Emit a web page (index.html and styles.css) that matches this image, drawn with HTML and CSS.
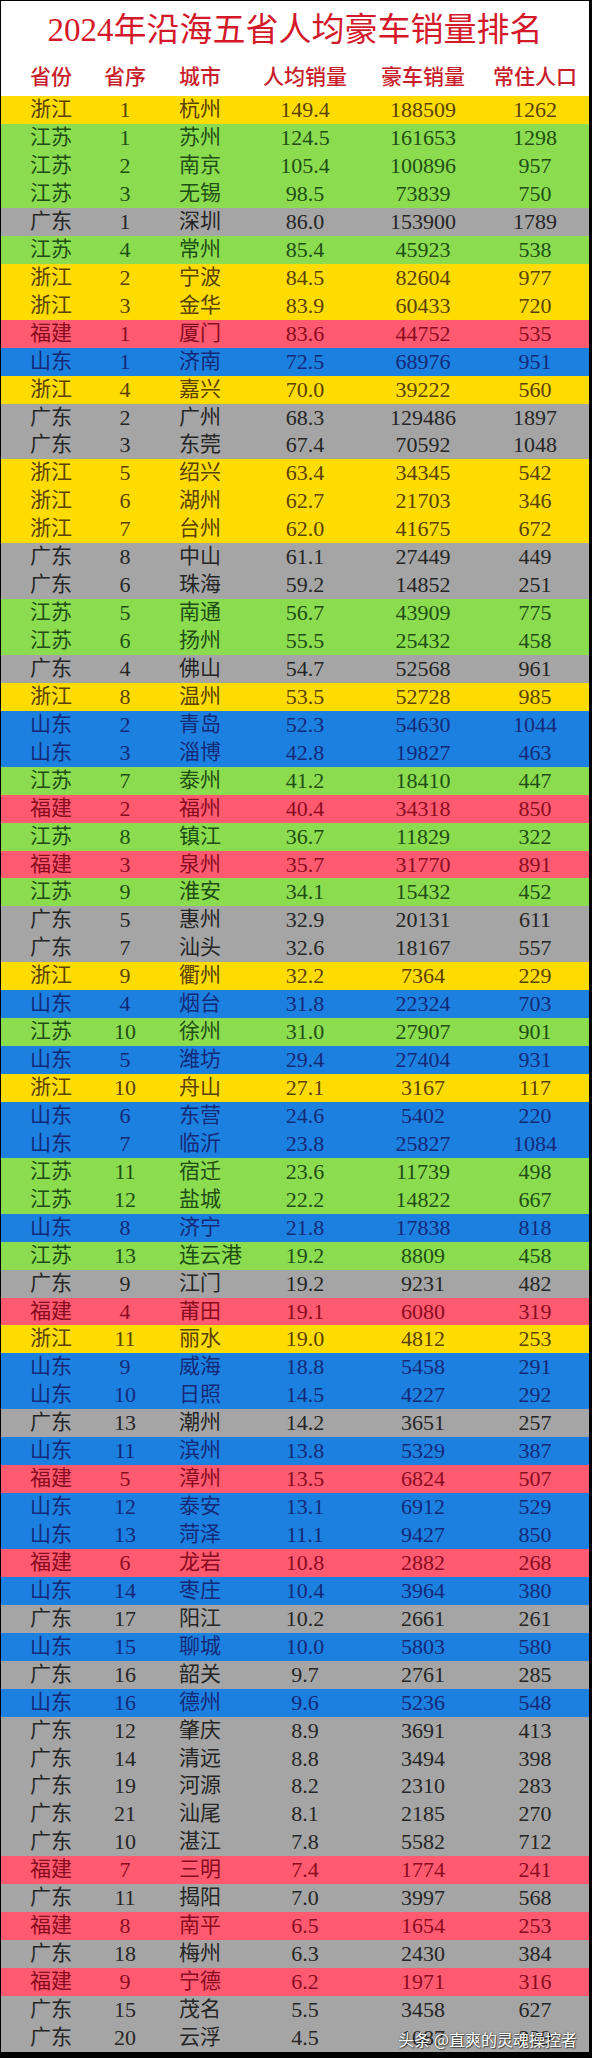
FILE: index.html
```html
<!DOCTYPE html>
<html lang="zh-CN">
<head>
<meta charset="utf-8">
<title>2024年沿海五省人均豪车销量排名</title>
<link rel="stylesheet" href="styles.css">
</head>
<body>
<div class="sheet">
  <div class="head">
    <h1 class="title">2024年沿海五省人均豪车销量排名</h1>
    <div class="row hdr">
      <span>省份</span><span>省序</span><span class="city">城市</span><span>人均销量</span><span>豪车销量</span><span>常住人口</span>
    </div>
  </div>
  <div class="rows">
    <div class="row zj"><span>浙江</span><span class="n">1</span><span class="city">杭州</span><span class="n">149.4</span><span class="n">188509</span><span class="n">1262</span></div>
    <div class="row js"><span>江苏</span><span class="n">1</span><span class="city">苏州</span><span class="n">124.5</span><span class="n">161653</span><span class="n">1298</span></div>
    <div class="row js"><span>江苏</span><span class="n">2</span><span class="city">南京</span><span class="n">105.4</span><span class="n">100896</span><span class="n">957</span></div>
    <div class="row js"><span>江苏</span><span class="n">3</span><span class="city">无锡</span><span class="n">98.5</span><span class="n">73839</span><span class="n">750</span></div>
    <div class="row gd"><span>广东</span><span class="n">1</span><span class="city">深圳</span><span class="n">86.0</span><span class="n">153900</span><span class="n">1789</span></div>
    <div class="row js"><span>江苏</span><span class="n">4</span><span class="city">常州</span><span class="n">85.4</span><span class="n">45923</span><span class="n">538</span></div>
    <div class="row zj"><span>浙江</span><span class="n">2</span><span class="city">宁波</span><span class="n">84.5</span><span class="n">82604</span><span class="n">977</span></div>
    <div class="row zj"><span>浙江</span><span class="n">3</span><span class="city">金华</span><span class="n">83.9</span><span class="n">60433</span><span class="n">720</span></div>
    <div class="row fj"><span>福建</span><span class="n">1</span><span class="city">厦门</span><span class="n">83.6</span><span class="n">44752</span><span class="n">535</span></div>
    <div class="row sd"><span>山东</span><span class="n">1</span><span class="city">济南</span><span class="n">72.5</span><span class="n">68976</span><span class="n">951</span></div>
    <div class="row zj"><span>浙江</span><span class="n">4</span><span class="city">嘉兴</span><span class="n">70.0</span><span class="n">39222</span><span class="n">560</span></div>
    <div class="row gd"><span>广东</span><span class="n">2</span><span class="city">广州</span><span class="n">68.3</span><span class="n">129486</span><span class="n">1897</span></div>
    <div class="row gd"><span>广东</span><span class="n">3</span><span class="city">东莞</span><span class="n">67.4</span><span class="n">70592</span><span class="n">1048</span></div>
    <div class="row zj"><span>浙江</span><span class="n">5</span><span class="city">绍兴</span><span class="n">63.4</span><span class="n">34345</span><span class="n">542</span></div>
    <div class="row zj"><span>浙江</span><span class="n">6</span><span class="city">湖州</span><span class="n">62.7</span><span class="n">21703</span><span class="n">346</span></div>
    <div class="row zj"><span>浙江</span><span class="n">7</span><span class="city">台州</span><span class="n">62.0</span><span class="n">41675</span><span class="n">672</span></div>
    <div class="row gd"><span>广东</span><span class="n">8</span><span class="city">中山</span><span class="n">61.1</span><span class="n">27449</span><span class="n">449</span></div>
    <div class="row gd"><span>广东</span><span class="n">6</span><span class="city">珠海</span><span class="n">59.2</span><span class="n">14852</span><span class="n">251</span></div>
    <div class="row js"><span>江苏</span><span class="n">5</span><span class="city">南通</span><span class="n">56.7</span><span class="n">43909</span><span class="n">775</span></div>
    <div class="row js"><span>江苏</span><span class="n">6</span><span class="city">扬州</span><span class="n">55.5</span><span class="n">25432</span><span class="n">458</span></div>
    <div class="row gd"><span>广东</span><span class="n">4</span><span class="city">佛山</span><span class="n">54.7</span><span class="n">52568</span><span class="n">961</span></div>
    <div class="row zj"><span>浙江</span><span class="n">8</span><span class="city">温州</span><span class="n">53.5</span><span class="n">52728</span><span class="n">985</span></div>
    <div class="row sd"><span>山东</span><span class="n">2</span><span class="city">青岛</span><span class="n">52.3</span><span class="n">54630</span><span class="n">1044</span></div>
    <div class="row sd"><span>山东</span><span class="n">3</span><span class="city">淄博</span><span class="n">42.8</span><span class="n">19827</span><span class="n">463</span></div>
    <div class="row js"><span>江苏</span><span class="n">7</span><span class="city">泰州</span><span class="n">41.2</span><span class="n">18410</span><span class="n">447</span></div>
    <div class="row fj"><span>福建</span><span class="n">2</span><span class="city">福州</span><span class="n">40.4</span><span class="n">34318</span><span class="n">850</span></div>
    <div class="row js"><span>江苏</span><span class="n">8</span><span class="city">镇江</span><span class="n">36.7</span><span class="n">11829</span><span class="n">322</span></div>
    <div class="row fj"><span>福建</span><span class="n">3</span><span class="city">泉州</span><span class="n">35.7</span><span class="n">31770</span><span class="n">891</span></div>
    <div class="row js"><span>江苏</span><span class="n">9</span><span class="city">淮安</span><span class="n">34.1</span><span class="n">15432</span><span class="n">452</span></div>
    <div class="row gd"><span>广东</span><span class="n">5</span><span class="city">惠州</span><span class="n">32.9</span><span class="n">20131</span><span class="n">611</span></div>
    <div class="row gd"><span>广东</span><span class="n">7</span><span class="city">汕头</span><span class="n">32.6</span><span class="n">18167</span><span class="n">557</span></div>
    <div class="row zj"><span>浙江</span><span class="n">9</span><span class="city">衢州</span><span class="n">32.2</span><span class="n">7364</span><span class="n">229</span></div>
    <div class="row sd"><span>山东</span><span class="n">4</span><span class="city">烟台</span><span class="n">31.8</span><span class="n">22324</span><span class="n">703</span></div>
    <div class="row js"><span>江苏</span><span class="n">10</span><span class="city">徐州</span><span class="n">31.0</span><span class="n">27907</span><span class="n">901</span></div>
    <div class="row sd"><span>山东</span><span class="n">5</span><span class="city">潍坊</span><span class="n">29.4</span><span class="n">27404</span><span class="n">931</span></div>
    <div class="row zj"><span>浙江</span><span class="n">10</span><span class="city">舟山</span><span class="n">27.1</span><span class="n">3167</span><span class="n">117</span></div>
    <div class="row sd"><span>山东</span><span class="n">6</span><span class="city">东营</span><span class="n">24.6</span><span class="n">5402</span><span class="n">220</span></div>
    <div class="row sd"><span>山东</span><span class="n">7</span><span class="city">临沂</span><span class="n">23.8</span><span class="n">25827</span><span class="n">1084</span></div>
    <div class="row js"><span>江苏</span><span class="n">11</span><span class="city">宿迁</span><span class="n">23.6</span><span class="n">11739</span><span class="n">498</span></div>
    <div class="row js"><span>江苏</span><span class="n">12</span><span class="city">盐城</span><span class="n">22.2</span><span class="n">14822</span><span class="n">667</span></div>
    <div class="row sd"><span>山东</span><span class="n">8</span><span class="city">济宁</span><span class="n">21.8</span><span class="n">17838</span><span class="n">818</span></div>
    <div class="row js"><span>江苏</span><span class="n">13</span><span class="city">连云港</span><span class="n">19.2</span><span class="n">8809</span><span class="n">458</span></div>
    <div class="row gd"><span>广东</span><span class="n">9</span><span class="city">江门</span><span class="n">19.2</span><span class="n">9231</span><span class="n">482</span></div>
    <div class="row fj"><span>福建</span><span class="n">4</span><span class="city">莆田</span><span class="n">19.1</span><span class="n">6080</span><span class="n">319</span></div>
    <div class="row zj"><span>浙江</span><span class="n">11</span><span class="city">丽水</span><span class="n">19.0</span><span class="n">4812</span><span class="n">253</span></div>
    <div class="row sd"><span>山东</span><span class="n">9</span><span class="city">威海</span><span class="n">18.8</span><span class="n">5458</span><span class="n">291</span></div>
    <div class="row sd"><span>山东</span><span class="n">10</span><span class="city">日照</span><span class="n">14.5</span><span class="n">4227</span><span class="n">292</span></div>
    <div class="row gd"><span>广东</span><span class="n">13</span><span class="city">潮州</span><span class="n">14.2</span><span class="n">3651</span><span class="n">257</span></div>
    <div class="row sd"><span>山东</span><span class="n">11</span><span class="city">滨州</span><span class="n">13.8</span><span class="n">5329</span><span class="n">387</span></div>
    <div class="row fj"><span>福建</span><span class="n">5</span><span class="city">漳州</span><span class="n">13.5</span><span class="n">6824</span><span class="n">507</span></div>
    <div class="row sd"><span>山东</span><span class="n">12</span><span class="city">泰安</span><span class="n">13.1</span><span class="n">6912</span><span class="n">529</span></div>
    <div class="row sd"><span>山东</span><span class="n">13</span><span class="city">菏泽</span><span class="n">11.1</span><span class="n">9427</span><span class="n">850</span></div>
    <div class="row fj"><span>福建</span><span class="n">6</span><span class="city">龙岩</span><span class="n">10.8</span><span class="n">2882</span><span class="n">268</span></div>
    <div class="row sd"><span>山东</span><span class="n">14</span><span class="city">枣庄</span><span class="n">10.4</span><span class="n">3964</span><span class="n">380</span></div>
    <div class="row gd"><span>广东</span><span class="n">17</span><span class="city">阳江</span><span class="n">10.2</span><span class="n">2661</span><span class="n">261</span></div>
    <div class="row sd"><span>山东</span><span class="n">15</span><span class="city">聊城</span><span class="n">10.0</span><span class="n">5803</span><span class="n">580</span></div>
    <div class="row gd"><span>广东</span><span class="n">16</span><span class="city">韶关</span><span class="n">9.7</span><span class="n">2761</span><span class="n">285</span></div>
    <div class="row sd"><span>山东</span><span class="n">16</span><span class="city">德州</span><span class="n">9.6</span><span class="n">5236</span><span class="n">548</span></div>
    <div class="row gd"><span>广东</span><span class="n">12</span><span class="city">肇庆</span><span class="n">8.9</span><span class="n">3691</span><span class="n">413</span></div>
    <div class="row gd"><span>广东</span><span class="n">14</span><span class="city">清远</span><span class="n">8.8</span><span class="n">3494</span><span class="n">398</span></div>
    <div class="row gd"><span>广东</span><span class="n">19</span><span class="city">河源</span><span class="n">8.2</span><span class="n">2310</span><span class="n">283</span></div>
    <div class="row gd"><span>广东</span><span class="n">21</span><span class="city">汕尾</span><span class="n">8.1</span><span class="n">2185</span><span class="n">270</span></div>
    <div class="row gd"><span>广东</span><span class="n">10</span><span class="city">湛江</span><span class="n">7.8</span><span class="n">5582</span><span class="n">712</span></div>
    <div class="row fj"><span>福建</span><span class="n">7</span><span class="city">三明</span><span class="n">7.4</span><span class="n">1774</span><span class="n">241</span></div>
    <div class="row gd"><span>广东</span><span class="n">11</span><span class="city">揭阳</span><span class="n">7.0</span><span class="n">3997</span><span class="n">568</span></div>
    <div class="row fj"><span>福建</span><span class="n">8</span><span class="city">南平</span><span class="n">6.5</span><span class="n">1654</span><span class="n">253</span></div>
    <div class="row gd"><span>广东</span><span class="n">18</span><span class="city">梅州</span><span class="n">6.3</span><span class="n">2430</span><span class="n">384</span></div>
    <div class="row fj"><span>福建</span><span class="n">9</span><span class="city">宁德</span><span class="n">6.2</span><span class="n">1971</span><span class="n">316</span></div>
    <div class="row gd"><span>广东</span><span class="n">15</span><span class="city">茂名</span><span class="n">5.5</span><span class="n">3458</span><span class="n">627</span></div>
    <div class="row gd"><span>广东</span><span class="n">20</span><span class="city">云浮</span><span class="n">4.5</span><span class="n">1087</span><span class="n">239</span></div>
  </div>
  <div class="mark">头条 @直爽的灵魂操控者</div>
</div>
</body>
</html>
```

FILE: styles.css
```css
html, body {
  margin: 0;
  padding: 0;
  background: #000;
}
body {
  width: 592px;
  height: 2058px;
  overflow: hidden;
}
.sheet {
  position: relative;
  margin: 1px 3px 0 1px;
  width: 588px;
  height: 2057px;
  background: #000;
  font-family: "Liberation Serif", "Noto Sans CJK SC", serif;
}
.head {
  background: #fff;
  height: 95.2px;
  display: flex;
  flex-direction: column;
}
.title {
  margin: 0;
  height: 58px;
  line-height: 58px;
  text-align: center;
  font-size: 33px;
  font-weight: 400;
  color: #d4192b;
}
.row {
  display: grid;
  grid-template-columns: 100px 48px 101px 110px 126px 98px 5px;
  align-items: center;
  height: 27.95px;
  font-size: 21px;
  line-height: 27.95px;
  white-space: nowrap;
}
.row > span {
  text-align: center;
}
.row > span.city {
  text-align: left;
  padding-left: 30px;
}
.row > span.n {
  font-size: 22px;
}
.hdr {
  height: 37px;
  line-height: 37px;
  color: #c81e2c;
  font-weight: 500;
}
.zj { background: #ffdc00; color: #5a4200; }
.js { background: #8cdc50; color: #1f4f14; }
.gd { background: #a5a5a5; color: #262626; }
.fj { background: #ff5a70; color: #8a0c20; }
.sd { background: #1c80e0; color: #142a78; }
.mark {
  position: absolute;
  right: 12px;
  bottom: 10px;
  font-family: "Noto Sans CJK SC", sans-serif;
  font-size: 16px;
  line-height: 18px;
  color: #fff;
  text-shadow: 0 0 2px rgba(0,0,0,0.6), 1px 1px 1px rgba(0,0,0,0.5);
}
```
